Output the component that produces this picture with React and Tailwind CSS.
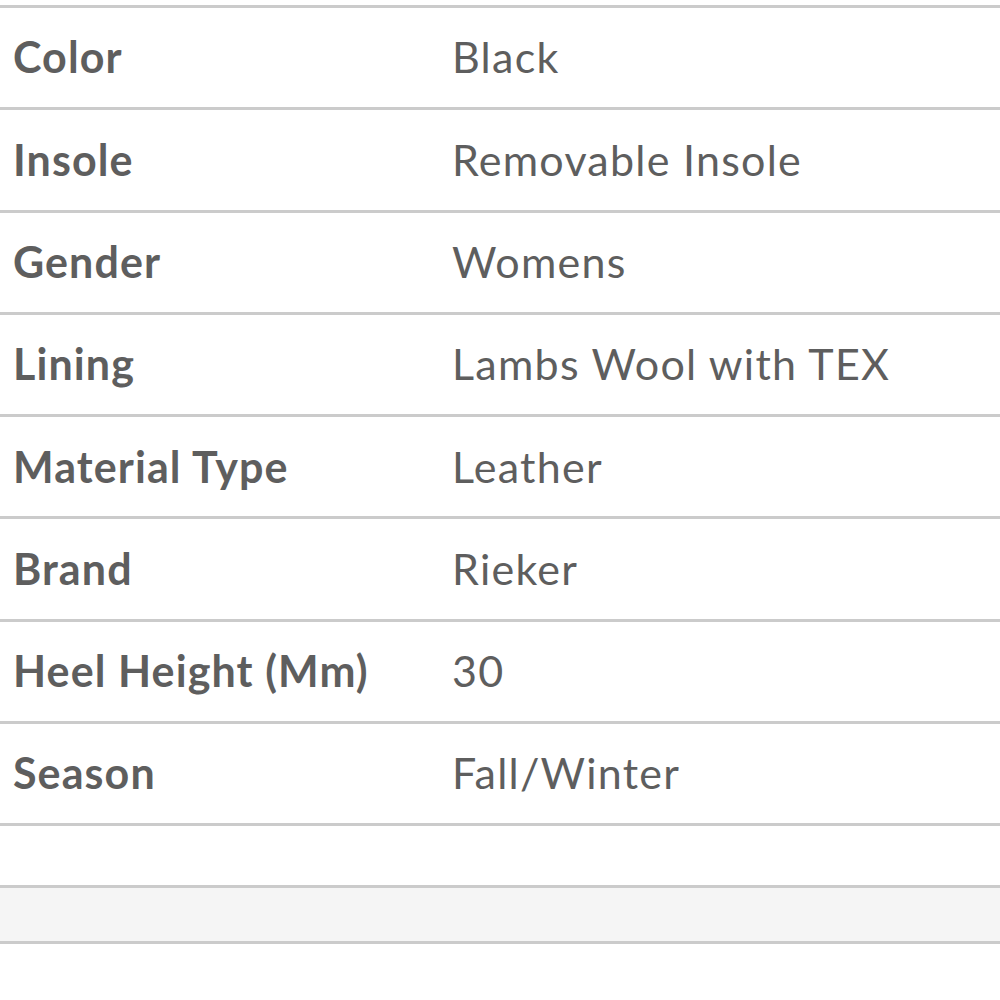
export default function App() {
  const rows = [
    ["Color", "Black"],
    ["Insole", "Removable Insole"],
    ["Gender", "Womens"],
    ["Lining", "Lambs Wool with TEX"],
    ["Material Type", "Leather"],
    ["Brand", "Rieker"],
    ["Heel Height (Mm)", "30"],
    ["Season", "Fall/Winter"],
  ];
  return (
    <div className="w-[1000px] h-[1000px] bg-white overflow-hidden pt-[5px] text-[#5e5e5e]" style={{ fontFamily: "Lato, 'Open Sans', sans-serif" }}>
      <div className="border-t-[3px] border-[#cbcbcb]">
        {rows.map(([k, v]) => (
          <div key={k} className="flex items-center h-[102.3px] border-b-[3px] border-[#cbcbcb]">
            <div className="w-[452px] pl-[13px] text-[43px] font-bold tracking-[1.1px]">{k}</div>
            <div className="text-[43px] tracking-[1.25px]">{v}</div>
          </div>
        ))}
        <div className="h-[62px] border-b-[3px] border-[#cbcbcb]"></div>
        <div className="h-[56px] bg-[#f5f5f5] border-b-[3px] border-[#cbcbcb]"></div>
      </div>
    </div>
  );
}
